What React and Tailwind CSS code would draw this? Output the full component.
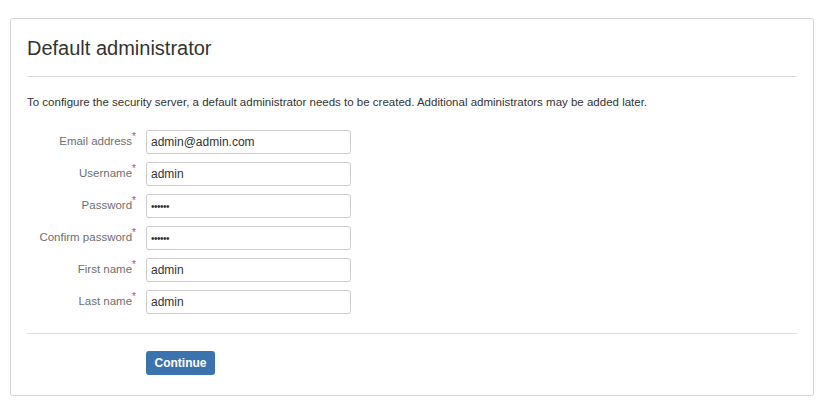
const fields = [
  { label: "Email address", value: "admin@admin.com" },
  { label: "Username", value: "admin" },
  { label: "Password", value: "••••••", pw: true },
  { label: "Confirm password", value: "••••••", pw: true },
  { label: "First name", value: "admin" },
  { label: "Last name", value: "admin" },
];

export default function App() {
  return (
    <div className="w-[830px] h-[404px] bg-white pt-[18px] pl-[10px] font-['Liberation_Sans',Arial,sans-serif]">
      <div className="w-[804px] h-[378px] border border-[#d5d5d5] rounded-[3px] px-4">
        {/* header */}
        <h1 className="text-[20px] leading-[24px] text-[#333] pt-[17px] pb-[16px] border-b border-[#dcdcdc]">
          Default administrator
        </h1>

        <p className="text-[11.5px] leading-[16px] text-[#333] mt-[17px]">
          To configure the security server, a default administrator needs to be created. Additional administrators may be added later.
        </p>

        {/* form */}
        <div className="mt-[20px] flex flex-col gap-[8px]">
          {fields.map((f) => (
            <div key={f.label} className="flex items-center">
              <label className="w-[109px] text-right text-[11.5px] text-[#707070]">
                {f.label}
                <span className="text-[#d04437] text-[10px] relative -top-[5px]">*</span>
              </label>
              <div className="ml-[10px] w-[205px] h-[24px] border border-[#ccc] rounded-[3px] px-[4px] flex items-center text-[12px] text-[#333]">
                {f.pw ? <span className="text-[10px] tracking-[-0.5px]">{f.value}</span> : f.value}
              </div>
            </div>
          ))}
        </div>

        <div className="mt-[19px] border-t border-[#dcdcdc] pt-[16px] pl-[119px]">
          <button className="w-[69px] h-[24px] bg-[#3b73af] rounded-[3px] text-white text-[12px] font-bold">
            Continue
          </button>
        </div>
      </div>
    </div>
  );
}
